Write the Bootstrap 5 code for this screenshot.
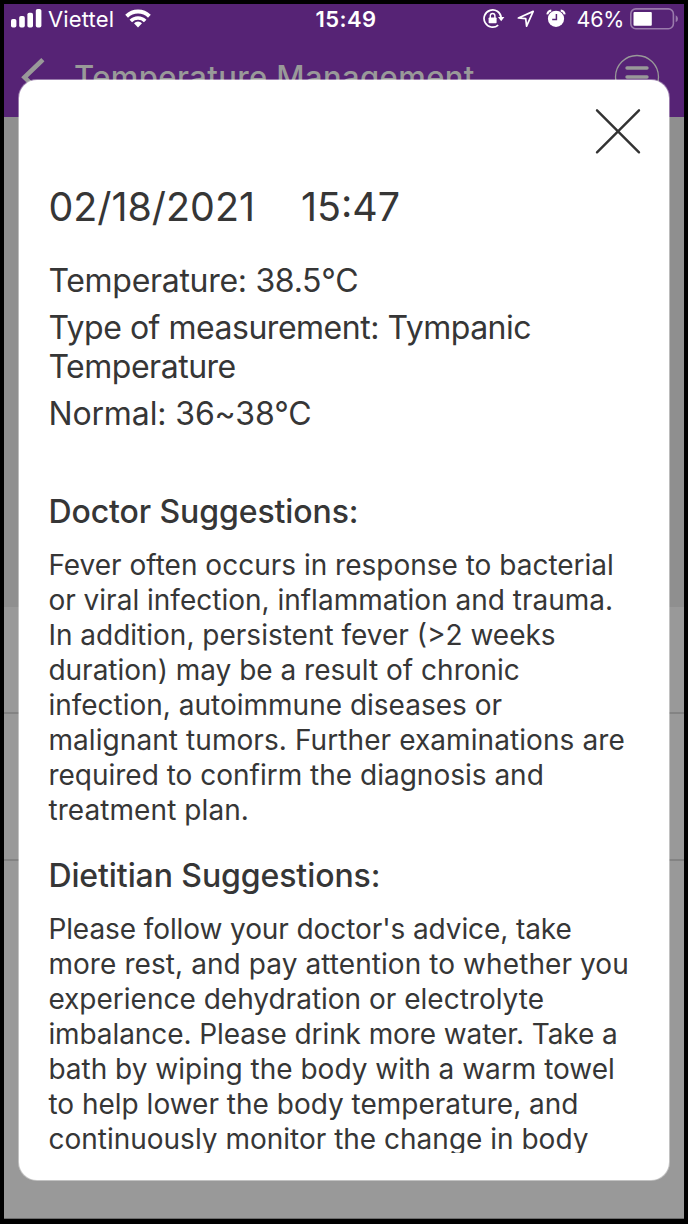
<!DOCTYPE html>
<html lang="en">
<head>
<meta charset="utf-8">
<meta name="viewport" content="width=device-width, initial-scale=1">
<title>Temperature Management</title>
<link href="https://cdn.jsdelivr.net/npm/bootstrap@5.3.0/dist/css/bootstrap.min.css" rel="stylesheet">
<style>
  body { font-family: Inter, "Liberation Sans", sans-serif; background: #000; color: #363636; }
  .phone { width: 688px; height: 1224px; padding: 4px 4px 5px; background: #000; overflow: hidden; }
  .screen { height: 1215px; background: #999; border-bottom: 1px solid #6b6b6b; overflow: hidden; }
  .top-area { height: 113px; background: #562375; }
  .status { height: 30px; color: #fff; font-size: 22px; line-height: 30px; }
  .status svg, .title-bar svg, .close-x svg { display: block; flex: none; }
  .carrier { letter-spacing: .15px; }
  .clock { font-size: 22px; letter-spacing: .4px; margin-left: 2px; }
  .level { font-size: 21.5px; letter-spacing: -.3px; margin-left: 11px; }
  .right-icons { margin-right: 5px; }
  .title-bar { height: 83px; padding: 20px 24px 0 17px; color: #999; }
  .page-title { font-size: 31px; line-height: 36px; letter-spacing: .4px; margin: 5px 0 0 27px; }
  .chart-area { height: 490px; background: #8f8f8f; }
  .record-row { border-bottom: 2px solid #838383; }
  .sheet { left: 19px; top: 80px; width: 650px; height: 1100px; border-radius: 18px; background: #fff; padding: 0 28.5px 0 29.4px; box-shadow: 0 0 0 1px rgba(255,255,255,.4); }
  .close-x { height: 103px; padding-top: 28px; background: none; }
  .scroll-body { height: 970px; overflow: hidden; white-space: nowrap; }
  .stamp { font-size: 39.4px; line-height: 48px; gap: 46px; }
  .info { font-size: 32px; line-height: 39px; margin-top: 30px; letter-spacing: -.48px; }
  .info p { margin: 0 0 8px; }
  .reading { letter-spacing: -.3px; }
  .range { letter-spacing: -.12px; }
  .heading { font-size: 32px; line-height: 39px; font-weight: 500; letter-spacing: -.09px; margin: 0; }
  .advice { font-size: 28px; line-height: 35px; margin: 17px 0 0; }
  .ln { display: block; }
  .wider { letter-spacing: .08px; }
  .tighter { letter-spacing: -.09px; }
</style>
</head>
<body>
<div class="phone position-relative">
  <div class="screen">
    <header class="top-area">
      <div class="status d-flex position-relative">
        <div class="d-flex align-items-start" style="padding-left:7px">
          <svg width="31" height="30" fill="#fff"><rect y="15" width="5.4" height="8.5" rx="1.8"/><rect x="8.2" y="12" width="5.6" height="11.5" rx="1.8"/><rect x="16.4" y="8.8" width="5.6" height="14.7" rx="1.8"/><rect x="24.8" y="5" width="5.6" height="18.5" rx="1.8"/></svg>
          <span class="carrier" style="margin-left:6px">Viettel</span>
          <svg width="28" height="30" style="margin-left:11px" fill="none" stroke="#fff" stroke-width="4"><path d="M1.6 12.2a16.4 16.4 0 0 1 22.8 0"/><path d="M5.8 17a10.2 10.2 0 0 1 14.4 0" stroke-width="3.6"/><path d="M13 23.4l-4-4.2a5.8 5.8 0 0 1 8 0z" fill="#fff" stroke="none"/></svg>
        </div>
        <div class="clock position-absolute top-0 start-50 translate-middle-x fw-semibold">15:49</div>
        <div class="right-icons d-flex ms-auto">
          <svg width="22" height="30" fill="none" stroke="#fff"><path d="M18.2 13.6A8.6 8.6 0 1 0 15.2 21.1" stroke-width="1.7"/><path d="M15 13h6.4l-3.2 4.2z" fill="#fff" stroke="none"/><rect x="5.6" y="13.4" width="8" height="5.9" rx=".8" fill="#fff" stroke="none"/><path d="M7.3 14v-2.2a2.3 2.3 0 0 1 4.6 0v2.2" stroke-width="1.4"/></svg>
          <svg width="18" height="30" style="margin-left:12px" fill="none" stroke="#fff" stroke-width="1.7" stroke-linejoin="round"><path d="M1.4 14L16.2 7.4 9.6 22.2 8.7 14.7z"/></svg>
          <svg width="20" height="30" style="margin-left:11px"><circle cx="10" cy="14.8" r="8.1" fill="#fff"/><path d="M1.3 10.4Q1.8 7 5.3 6.5M18.7 10.4Q18.2 7 14.7 6.5" fill="none" stroke="#fff" stroke-width="2"/><path d="M10.4 10v5.4H6.2" fill="none" stroke="#562375" stroke-width="1.5"/></svg>
          <span class="level">46%</span>
          <svg width="49" height="30" style="margin-left:6px"><rect x=".8" y="4.9" width="42.6" height="19.8" rx="5" fill="none" stroke="#9a7bac" stroke-width="1.6"/><rect x="3.5" y="8" width="18.3" height="13.7" rx="1" fill="#fff"/><path d="M45.7 11.3q2.3 1 2.3 3.5t-2.3 3.5z" fill="#9a7bac"/></svg>
        </div>
      </div>
      <div class="title-bar d-flex align-items-start">
        <svg width="26" height="48" fill="none" stroke="#999" stroke-width="4.6" stroke-linecap="square"><path d="M20.2 7.3L3.5 23.3 20.2 39.5"/></svg>
        <h1 class="page-title text-nowrap">Temperature Management</h1>
        <svg class="ms-auto" width="46" height="46" fill="none" stroke="#999"><circle cx="23" cy="23" r="21.5" stroke-width="1.3"/><path d="M13 14h20M13 23h20M13 32h20" stroke-width="3.4" stroke-linecap="round"/></svg>
      </div>
    </header>
    <main>
      <div class="chart-area"></div>
      <div class="record-row" style="height:107px"></div>
      <div class="record-row" style="height:147px"></div>
    </main>
  </div>

  <section class="sheet position-absolute" role="dialog">
    <div class="close-x d-flex justify-content-end">
      <svg width="46" height="46" stroke="#333" stroke-width="2.4" stroke-linecap="round"><path d="M2 2.3l42 42M44 2.3l-42 42"/></svg>
    </div>
    <div class="scroll-body">
      <div class="stamp d-flex"><span>02/18/2021</span><span>15:47</span></div>
      <div class="info">
        <p class="reading">Temperature: 38.5°C</p>
        <p><span class="ln">Type of measurement: Tympanic</span><span class="ln">Temperature</span></p>
        <p class="range">Normal: 36~38°C</p>
      </div>
      <h2 class="heading" style="margin-top:59px">Doctor Suggestions:</h2>
      <p class="advice">
        <span class="ln">Fever often occurs in response to bacterial</span>
        <span class="ln">or viral infection, inflammation and trauma.</span>
        <span class="ln">In addition, persistent fever (&gt;2 weeks</span>
        <span class="ln">duration) may be a result of chronic</span>
        <span class="ln">infection, autoimmune diseases or</span>
        <span class="ln wider">malignant tumors. Further examinations are</span>
        <span class="ln">required to confirm the diagnosis and</span>
        <span class="ln wider">treatment plan.</span>
      </p>
      <h2 class="heading" style="margin-top:28px">Dietitian Suggestions:</h2>
      <p class="advice">
        <span class="ln tighter">Please follow your doctor's advice, take</span>
        <span class="ln wider">more rest, and pay attention to whether you</span>
        <span class="ln">experience dehydration or electrolyte</span>
        <span class="ln tighter">imbalance. Please drink more water. Take a</span>
        <span class="ln">bath by wiping the body with a warm towel</span>
        <span class="ln">to help lower the body temperature, and</span>
        <span class="ln">continuously monitor the change in body</span>
      </p>
    </div>
  </section>
</div>
<script src="https://cdn.jsdelivr.net/npm/bootstrap@5.3.0/dist/js/bootstrap.bundle.min.js"></script>
</body>
</html>
